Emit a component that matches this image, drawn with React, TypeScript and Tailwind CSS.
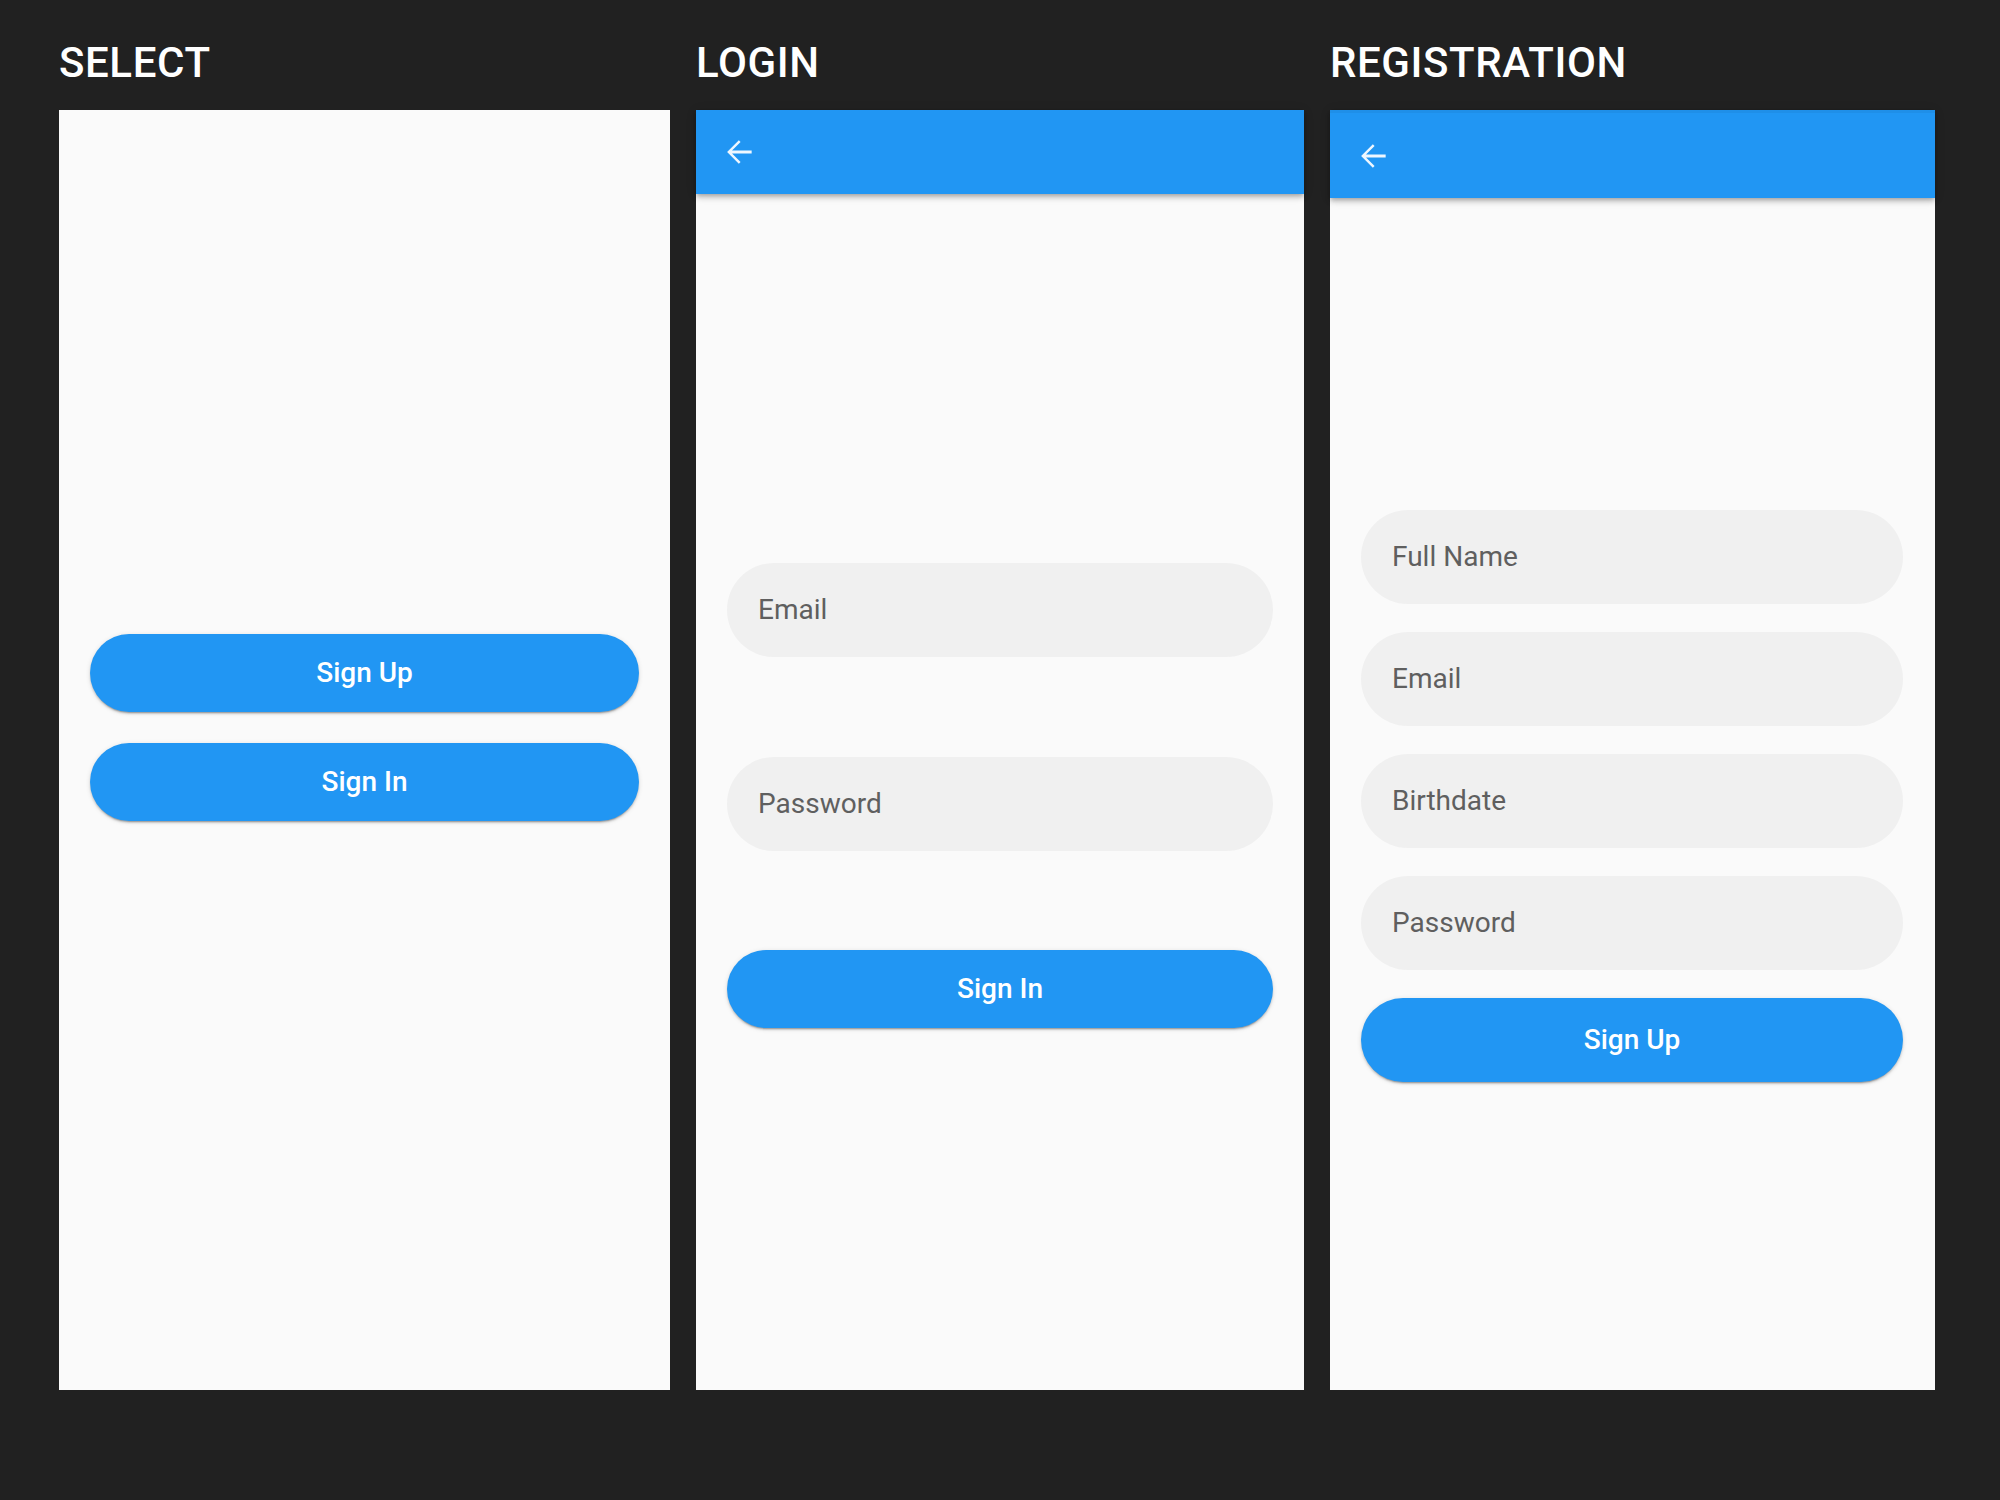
import React from "react";

const font = { fontFamily: "Roboto, 'Noto Sans', sans-serif" };

function BackArrow() {
  return (
    <svg width="38" height="38" viewBox="0 0 24 24" className="text-[#eef7ff]" fill="currentColor">
      <path d="M20 11.1H7.6l5.4-5.4L11.9 4.6 4.5 12l7.4 7.4 1.1-1.1-5.4-5.4H20z" />
    </svg>
  );
}

function Btn({ label, h = "h-[78px]" }: { label: string; h?: string }) {
  return (
    <div
      className={`${h} w-full rounded-full bg-[#2196f3] flex items-center justify-center text-white text-[28px] font-medium shadow-[0_3px_1px_-2px_rgba(0,0,0,0.2),0_2px_2px_0_rgba(0,0,0,0.14),0_1px_5px_0_rgba(0,0,0,0.12)]`}
    >
      {label}
    </div>
  );
}

function Field({ label }: { label: string }) {
  return (
    <div className="h-[94px] w-full rounded-full bg-[#f0f0f0] flex items-center pl-[31px] text-[28px] text-[#5f5f5f]">
      {label}
    </div>
  );
}

function AppBar({ h, strip }: { h: string; strip?: boolean }) {
  return (
    <div
      className={`${h} relative z-10 bg-[#2196f3] flex items-center pl-[24px] shadow-[0_2px_4px_-1px_rgba(0,0,0,0.2),0_4px_5px_0_rgba(0,0,0,0.14),0_1px_10px_0_rgba(0,0,0,0.12)] ${strip ? "border-t-[3px] border-[#1f8fe8]" : ""}`}
    >
      <BackArrow />
    </div>
  );
}

function Title({ text }: { text: string }) {
  return (
    <div className="pt-[42px] h-[110px] text-white text-[42px] leading-[42px] font-medium tracking-[0.6px]">
      {text}
    </div>
  );
}

export default function App() {
  return (
    <div className="w-[2000px] h-[1500px] bg-[#212121] flex pl-[59px] gap-[26px]" style={font}>
      <div className="w-[611px] flex flex-col">
        <Title text="SELECT" />
        <div className="h-[1280px] bg-[#fafafa] px-[31px] pt-[524px] flex flex-col gap-[31px]">
          <Btn label="Sign Up" />
          <Btn label="Sign In" />
        </div>
      </div>
      <div className="w-[608px] flex flex-col">
        <Title text="LOGIN" />
        <div className="h-[1280px] bg-[#fafafa] flex flex-col">
          <AppBar h="h-[84px]" />
          <div className="px-[31px] pt-[369px] flex flex-col">
            <Field label="Email" />
            <div className="h-[100px]" />
            <Field label="Password" />
            <div className="h-[99px]" />
            <Btn label="Sign In" />
          </div>
        </div>
      </div>
      <div className="w-[605px] flex flex-col">
        <Title text="REGISTRATION" />
        <div className="h-[1280px] bg-[#fafafa] flex flex-col">
          <AppBar h="h-[88px]" strip />
          <div className="pl-[31px] pr-[32px] pt-[312px] flex flex-col gap-[28px]">
            <Field label="Full Name" />
            <Field label="Email" />
            <Field label="Birthdate" />
            <Field label="Password" />
            <Btn label="Sign Up" h="h-[84px]" />
          </div>
        </div>
      </div>
    </div>
  );
}
